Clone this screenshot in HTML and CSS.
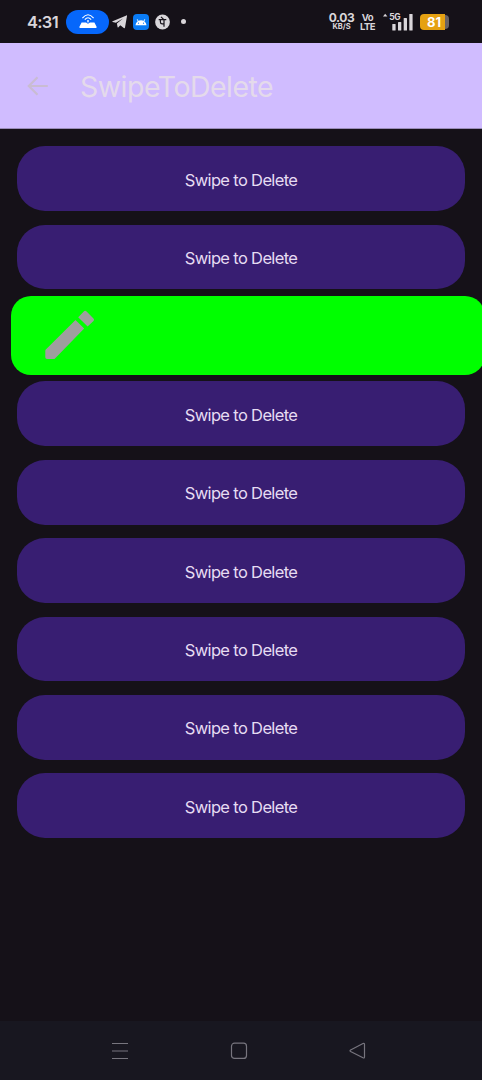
FILE: index.html
```html
<!DOCTYPE html>
<html lang="en">
<head>
<meta charset="utf-8">
<title>SwipeToDelete</title>
<link rel="stylesheet" href="styles.css">
</head>
<body>
<header class="status">
  <span class="clock">4:31</span>
  <span class="hotspot">
    <svg width="18" height="15" viewBox="0 0 18 15" fill="none" stroke="#fff">
      <path d="M3.4 4.2Q9-2.6 14.6 4.2M5.8 5.6Q9 1.8 12.2 5.6" stroke-width="1.1"/>
      <path d="M8 6.2h2L9.5 8.4h-1z" fill="#fff" stroke="none"/>
      <path d="M2.6 8.6h4.4l2 1.1 2-1.1h4.4l2.2 4.2q.3 1.2-.8 1.2H1.2q-1.1 0-.8-1.2z" fill="#fff" stroke="none"/>
    </svg>
  </span>
  <svg class="telegram" width="15" height="14" viewBox="0 0 15 14"><path d="M.6 6.2 14.4.4c.5-.2.7 0 .6.5l-2 11.5c-.1.8-.6.9-1.2.5L8.3 10.3l-1.9 2c-.4.4-.7.3-.8-.3L4.9 8.6 11 3.6 3.9 7.7.6 6.9c-.5-.1-.5-.5 0-.7z" fill="#d9d6da"/></svg>
  <svg class="android" width="16" height="16" viewBox="0 0 16 16"><rect width="16" height="16" rx="4" fill="#0a7cf5"/><path d="M2.5 11.3a5.5 5.5 0 0 1 2.2-4.1L3.7 5.3l.6-.3 1 1.8a6.3 6.3 0 0 1 5.4 0l1-1.8.6.3-1 1.9a5.5 5.5 0 0 1 2.2 4.1z" fill="#fff"/><circle cx="5.5" cy="9.2" r=".6" fill="#0a7cf5"/><circle cx="10.5" cy="9.2" r=".6" fill="#0a7cf5"/></svg>
  <svg class="pay" width="15" height="16" viewBox="0 0 15 16"><circle cx="7.5" cy="8" r="7.4" fill="#d9d6da"/><path d="M3.7 5.6h7.6M9 5.6v7.2M5.4 5.6V8q0 1.9 1.8 1.9H9M6 2.8l2.6 2.6" fill="none" stroke="#17131b" stroke-width="1.2"/></svg>
  <span class="dot"></span>
  <span class="speed"><b>0.03</b><small>KB/S</small></span>
  <span class="volte"><b>Vo</b><b>LTE</b></span>
  <svg class="signal" width="30" height="18" viewBox="0 0 30 18" fill="#d9d6da">
    <path d="M0 3.5 2.2.8l2.2 2.7z"/>
    <text x="6.2" y="7.2" class="net">5G</text>
    <rect x="9.3" y="11" width="3.3" height="6.5" rx=".6"/><rect x="15" y="9" width="3.3" height="8.5" rx=".6"/><rect x="20.7" y="5" width="3.3" height="12.5" rx=".6"/><rect x="26.3" y="1" width="3.3" height="16.5" rx=".6"/>
  </svg>
  <span class="battery">81</span><i class="cap"></i>
</header>
<div class="appbar">
  <svg width="22" height="22" viewBox="0 0 22 22" fill="none" stroke="#c9bcd2" stroke-width="2.2"><path d="M10.5 2.3 1.8 11l8.7 8.7M2 11h18.8"/></svg>
  <h1>SwipeToDelete</h1>
</div>
<main class="list">
  <div class="card">Swipe to Delete</div>
  <div class="card">Swipe to Delete</div>
  <div class="edit">
    <svg width="50" height="50" viewBox="0 0 50 50" fill="#9e9e9e"><path d="M.3 40.7Q.3 40 .8 39.5L30.5 10 39.2 18.6 10 48.4Q9.5 49 8.8 49H2Q.3 49 .3 47.3zM33.2 7.2 38.8 1.5Q40.2.2 41.6 1.5L48.5 8.4Q49.7 9.7 48.5 11L42.6 16.6z"/></svg>
  </div>
  <div class="card">Swipe to Delete</div>
  <div class="card">Swipe to Delete</div>
  <div class="card">Swipe to Delete</div>
  <div class="card">Swipe to Delete</div>
  <div class="card">Swipe to Delete</div>
  <div class="card">Swipe to Delete</div>
</main>
<nav class="nav">
  <svg width="18" height="18" viewBox="0 0 18 18"><path d="M1 1.5h16M1 9h16M1 16.5h16"/></svg>
  <svg width="18" height="18" viewBox="0 0 18 18"><rect x="1.5" y="1.2" width="15" height="15.2" rx="3"/></svg>
  <svg width="18" height="18" viewBox="0 0 18 18"><path d="M2.6 8 15 1.5Q16.5.9 16.5 2.5V14.8Q16.5 16.5 15 15.8L2.6 9.6Q1.5 8.8 2.6 8z"/></svg>
</nav>
</body>
</html>
```
FILE: styles.css
```css
* { box-sizing: border-box; }
body {
  margin: 0;
  width: 482px;
  height: 1080px;
  display: flex;
  flex-direction: column;
  overflow: hidden;
  background: #151118;
  font-family: Inter, Roboto, sans-serif;
}
svg { display: block; flex: none; }
.status {
  height: 43px;
  flex: none;
  display: flex;
  align-items: center;
  padding-left: 27px;
  color: #d9d6da;
}
.clock { width: 39px; font-size: 16.5px; font-weight: 600; letter-spacing: -0.7px; }
.hotspot {
  width: 43px;
  height: 24px;
  border-radius: 12px;
  background: #0667fb;
  display: flex;
  align-items: center;
  justify-content: center;
}
.telegram { margin-left: 3px; }
.android { margin-left: 6px; }
.pay { margin-left: 6px; }
.dot { width: 5px; height: 5px; margin-left: 11px; border-radius: 50%; background: #d9d6da; }
.speed { width: 26px; margin-left: 142.5px; text-align: center; }
.speed b { display: block; font-size: 12px; line-height: 10px; font-weight: 700; letter-spacing: -0.4px; }
.speed small { display: block; font-size: 7.5px; line-height: 8px; font-weight: 700; }
.volte { width: 16px; margin-left: 5px; font-size: 9.5px; line-height: 9px; letter-spacing: -0.5px; }
.volte b { display: block; text-align: center; }
.signal { margin-left: 7.5px; }
.net { font-size: 8.5px; font-weight: 700; letter-spacing: -0.4px; }
.battery {
  width: 25px;
  height: 16px;
  margin-left: 7px;
  border-radius: 4px 0 0 4px;
  background: #e5a112;
  color: #fff;
  font-size: 13px;
  line-height: 16px;
  font-weight: 700;
  padding-left: 3px;
  text-align: center;
}
.cap { width: 4px; height: 14px; border-radius: 0 4px 4px 0; background: #6a6364; }
.appbar {
  height: 86px;
  flex: none;
  display: flex;
  align-items: center;
  padding-left: 27px;
  background: #d0bcff;
  border-bottom: 1px solid #9a8cb9;
}
.appbar h1 {
  margin: 3px 0 0 31px;
  color: #e4daeb;
  font-size: 28.5px;
  line-height: 36px;
  font-weight: 400;
  letter-spacing: -0.52px;
}
.list { flex: 1; padding: 17.3px 17.3px 0; }
.card {
  height: 64.8px;
  margin-bottom: 13.6px;
  border-radius: 28px;
  background: #381e72;
  color: #e6dcf2;
  display: flex;
  align-items: center;
  justify-content: center;
  padding-top: 1.8px;
  font-size: 16.5px;
  letter-spacing: -0.65px;
}
.edit {
  width: 474px;
  height: 79px;
  margin: -7.4px 0 6.8px -6.5px;
  border-radius: 20px;
  background: #00ff00;
  display: flex;
  align-items: center;
  padding: 0 0 1px 34px;
}
.nav {
  height: 59px;
  flex: none;
  display: flex;
  align-items: center;
  justify-content: space-between;
  padding: 0 116px 0 111px;
  background: #181720;
}
.nav path, .nav rect { fill: none; stroke: #77757e; stroke-width: 1.2; }
```
